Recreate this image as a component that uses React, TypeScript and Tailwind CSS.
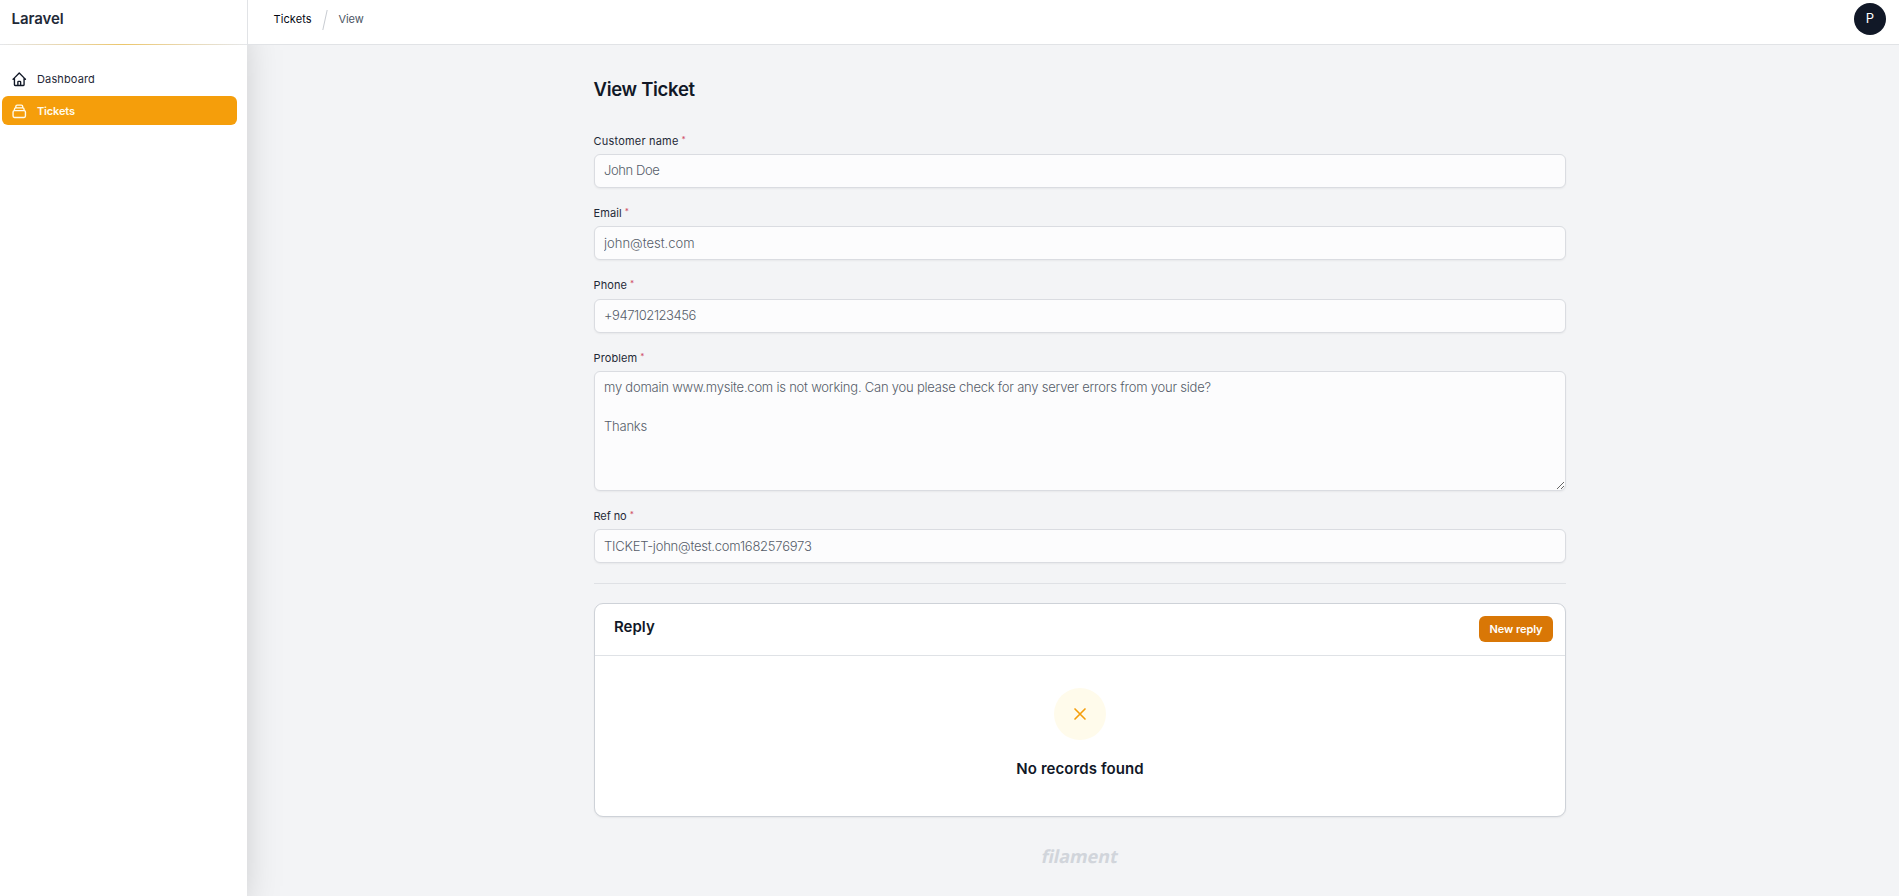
import clsx from "clsx";

function HeroIcon({ d, className }: { d: string; className?: string }) {
  return (
    <svg className={className} viewBox="0 0 24 24" fill="none" stroke="currentColor" strokeWidth={2} strokeLinecap="round" strokeLinejoin="round">
      <path d={d} />
    </svg>
  );
}

const HOME =
  "M3 12l2-2m0 0l7-7 7 7M5 10v10a1 1 0 001 1h3m10-11l2 2m-2-2v10a1 1 0 01-1 1h-3m-6 0a1 1 0 001-1v-4a1 1 0 011-1h2a1 1 0 011 1v4a1 1 0 001 1m-6 0h6";
const COLLECTION =
  "M19 11H5m14 0a2 2 0 012 2v6a2 2 0 01-2 2H5a2 2 0 01-2-2v-6a2 2 0 012-2m14 0V9a2 2 0 00-2-2M5 11V9a2 2 0 012-2m0 0V5a2 2 0 012-2h6a2 2 0 012 2v2M7 7h10";
const CLOSE = "M6 18L18 6M6 6l12 12";

const CONTROL =
  "block w-full rounded-[6px] border border-[#dadce1] bg-[#fcfcfd] px-[9px] text-[13px] font-light text-[#565d69] shadow-[0_1px_2px_rgba(0,0,0,0.05)] outline-none";

type FieldProps = {
  label: string;
  value: string;
  tracking: string;
  labelTracking?: string;
  labelClass?: string;
  inputClass?: string;
  multiline?: boolean;
};

function Field({
  label,
  value,
  tracking,
  labelTracking = "tracking-[0.1px]",
  labelClass = "h-[21px]",
  inputClass = "pb-[2px]",
  multiline,
}: FieldProps) {
  return (
    <div>
      <label className={clsx("-ml-[0.5px] flex text-[11px] leading-4 font-normal text-[#1f2937]", labelClass)}>
        <span className={labelTracking}>{label}</span>
        <sup className="top-0 ml-[3px] h-3 text-[8px] leading-[12px] font-medium text-[#d0506a]">*</sup>
      </label>
      {multiline ? (
        <textarea readOnly defaultValue={value} className={clsx(CONTROL, tracking, "h-[120px] resize-y pt-[5.5px] leading-[19.5px]")} />
      ) : (
        <input readOnly defaultValue={value} className={clsx(CONTROL, tracking, inputClass, "h-[34px]")} />
      )}
    </div>
  );
}

function Sidebar() {
  return (
    <aside className="relative z-10 flex w-[247px] shrink-0 flex-col bg-white shadow-[0_20px_40px_-10px_rgba(0,0,0,0.25)]">
      <div className="h-[45px] bg-white">
        <div className="h-11 pt-[9px] pl-[11.5px] text-[15px] leading-5 font-semibold tracking-[-0.08px] text-[#1f2937]">Laravel</div>
        <div className="h-px w-full bg-linear-to-r from-[#e5e7eb] via-[#ecc66a] to-[#e5e7eb]" />
      </div>
      <nav className="flex flex-col gap-[3px] pt-[19px] pl-[2px] text-[11px]">
        <a className="flex h-[29px] w-[235px] items-center gap-[9.5px] pt-px pl-[9px] font-normal tracking-[0.13px] text-[#1f2937]">
          <HeroIcon d={HOME} className="size-[16.5px] text-[#111827]" />
          Dashboard
        </a>
        <a className="flex h-[29px] w-[235px] items-center gap-[9.5px] rounded-[6px] bg-[#f59e0b] pt-px pl-[9px] font-semibold tracking-[-0.15px] text-[#fffbeb]">
          <HeroIcon d={COLLECTION} className="size-[16.5px]" />
          Tickets
        </a>
      </nav>
    </aside>
  );
}

function Topbar() {
  return (
    <header className="relative z-20 flex h-[45px] items-start justify-between border-b border-l border-[#e1e3e6] bg-white pr-[13px] pl-[25.5px]">
      <div className="flex h-[38px] items-center text-[11px] font-normal">
        <span className="w-[38px] tracking-[0.1px] text-[#030712]">Tickets</span>
        <svg className="mt-[2px] ml-[9.5px] h-[22px] w-[8px]" viewBox="0 0 8 22" fill="none" stroke="#c8ccd2">
          <path d="M6.2 1L1.8 21" />
        </svg>
        <span className="ml-[9.5px] tracking-[-0.1px] text-[#4b5563]">View</span>
      </div>
      <div className="mt-[3px] flex size-8 items-center justify-center rounded-full bg-[#111827] text-[13px] font-normal text-white">P</div>
    </header>
  );
}

function ReplyCard() {
  return (
    <section className="mt-[19px] h-[214px] rounded-[9px] border border-[#ced2d8] bg-white shadow-[0_1px_2px_rgba(0,0,0,0.06)]">
      <div className="flex h-[52px] items-start justify-between border-b border-[#dfe2e6] pr-3 pl-[19px]">
        <h3 className="mt-[13px] text-[15px] leading-5 font-semibold text-[#111827]">Reply</h3>
        <button className="mt-3 h-[26px] w-[74px] rounded-[6px] bg-[#d97706] text-[11px] font-semibold tracking-[-0.08px] text-white">New reply</button>
      </div>
      <div className="flex flex-col items-center pt-8">
        <div className="flex size-[52px] items-center justify-center rounded-full bg-[#fffbeb] pb-px text-[#f59e0b]">
          <HeroIcon d={CLOSE} className="size-5" />
        </div>
        <h2 className="mt-[19px] text-[15px] leading-5 font-semibold tracking-[0.08px] text-[#111827]">No records found</h2>
      </div>
    </section>
  );
}

export default function App() {
  return (
    <div className="flex h-[896px] overflow-hidden bg-[#f3f4f6] font-['Inter','DejaVu_Sans',sans-serif]">
      <Sidebar />
      <div className="flex flex-1 flex-col">
        <Topbar />
        <main className="ml-[347px] w-[972px]">
          <h1 className="mt-[32px] mb-[32px] -ml-[0.5px] text-[18.5px] leading-6 font-semibold tracking-[-0.3px] text-[#111827]">View Ticket</h1>
          <form className="flex flex-col gap-[17px]">
            <Field label="Customer name" value="John Doe" tracking="tracking-[-0.39px]" labelTracking="tracking-[0.2px]" />
            <Field label="Email" value="john@test.com" tracking="tracking-[0px]" inputClass="pb-0" />
            <Field label="Phone" value="+947102123456" tracking="tracking-[-0.43px]" labelClass="h-[22px]" />
            <Field
              label="Problem"
              value={"my domain www.mysite.com is not working. Can you please check for any server errors from your side?\n\nThanks"}
              tracking="tracking-[-0.22px]"
              multiline
            />
            <Field
              label="Ref no"
              value="TICKET-john@test.com1682576973"
              tracking="tracking-[-0.23px]"
              labelTracking="tracking-[-0.08px]"
              inputClass="pb-0"
            />
          </form>
          <hr className="mt-5 border-[#dfe1e5]" />
          <ReplyCard />
          <footer className="mt-[25px] text-center font-['Noto_Sans'] text-[18px] leading-7 font-bold text-[#d1d5db]">
            <span className="inline-block -skew-x-12">filament</span>
          </footer>
        </main>
      </div>
    </div>
  );
}
